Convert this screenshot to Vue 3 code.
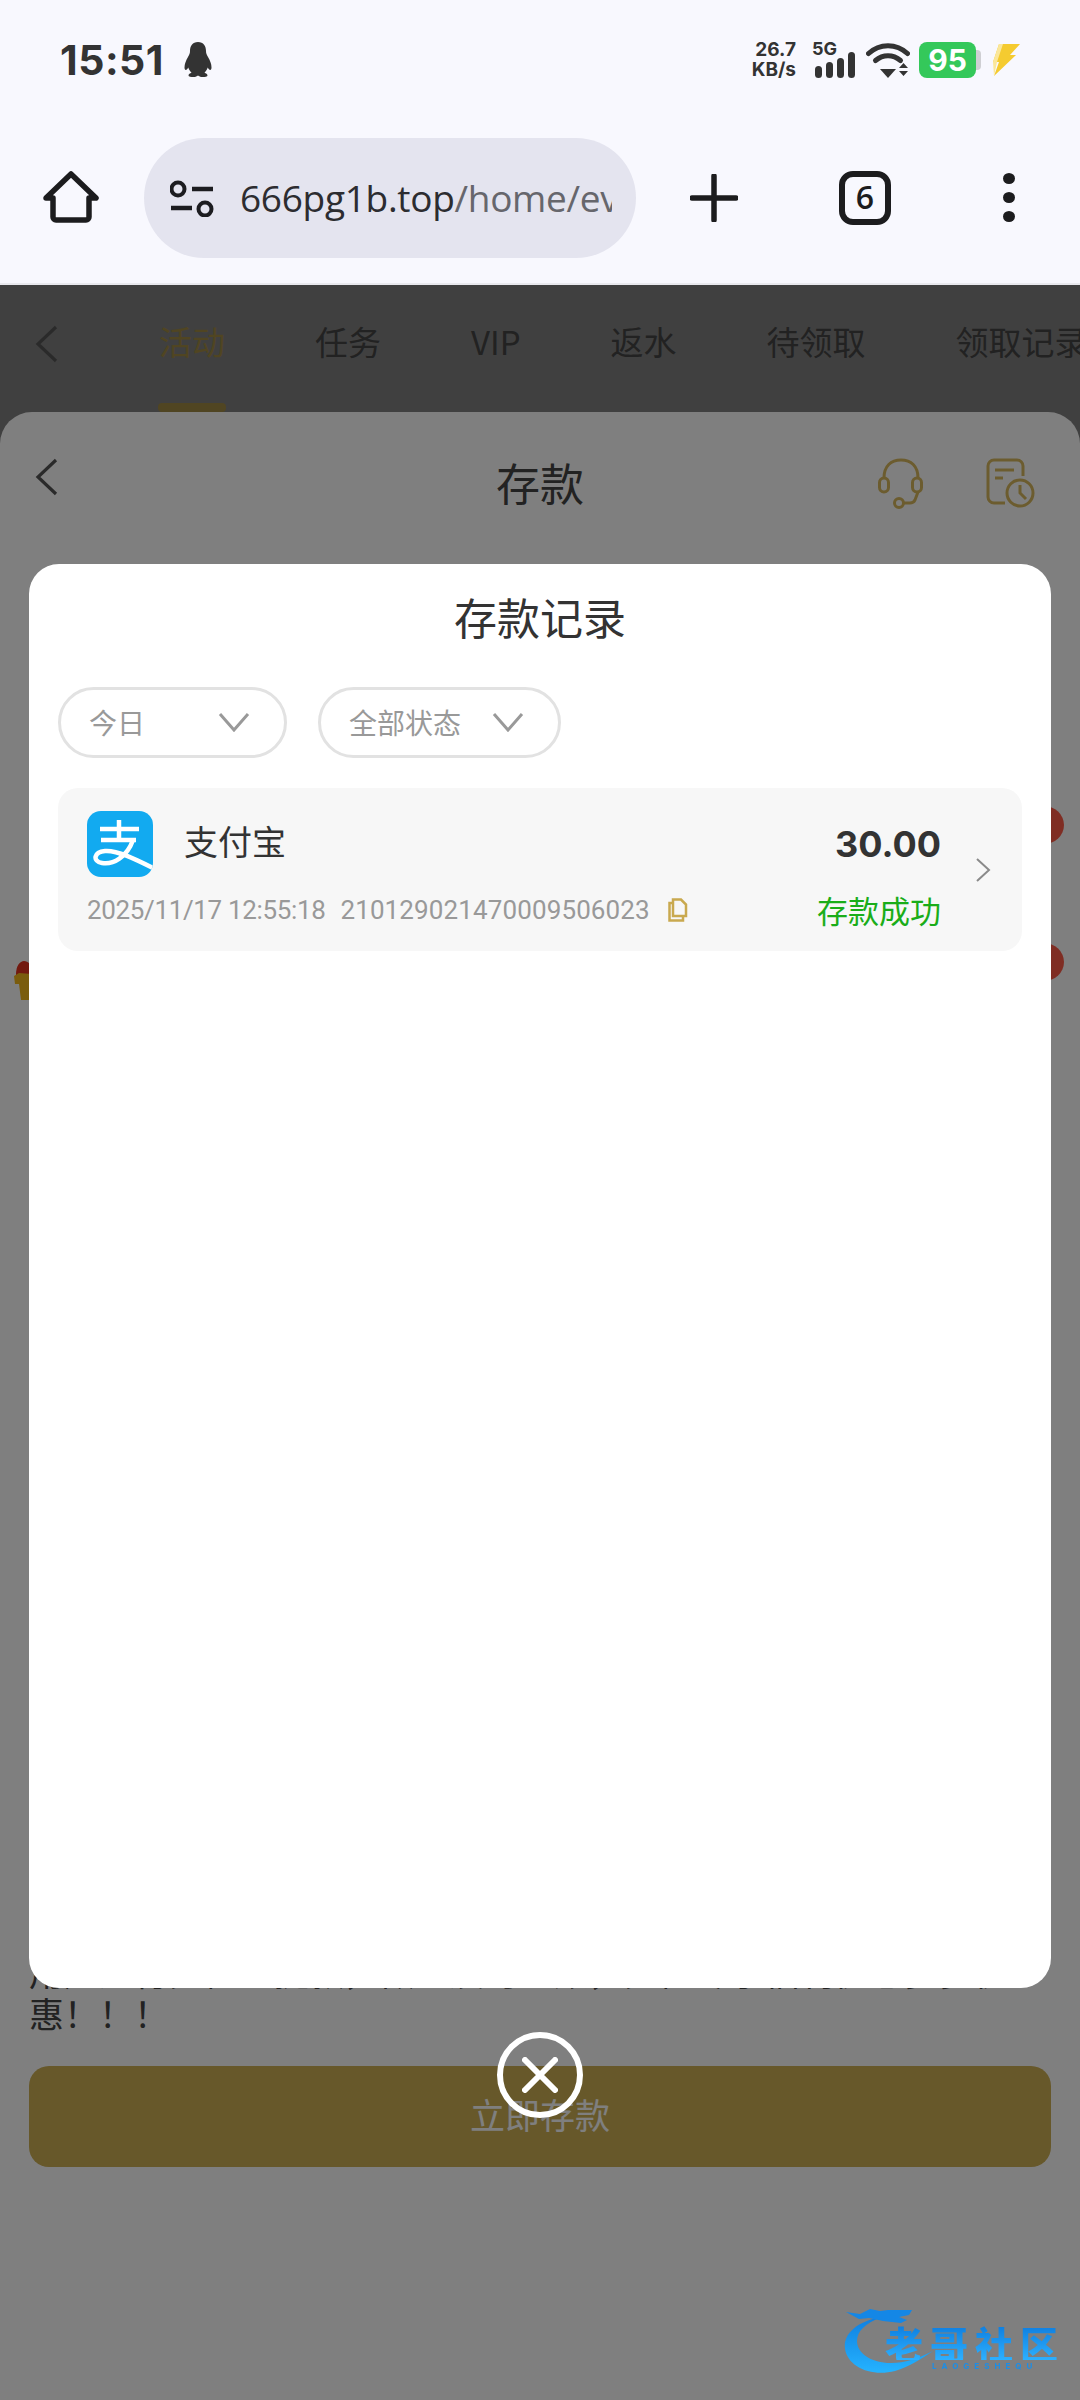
<template>
  <div class="phone">
    <div class="status">
      <div class="status-left">
        <span class="time">15:51</span>
        <svg class="penguin" viewBox="0 0 30 38" width="30" height="38">
          <path d="M15 1c-5.500 0-8 4-8 9 0 2-.5 3.500-2 6-2 3.200-3.500 7-3.500 10.500 0 1.500.5 2.500 1.300 2.500s1.700-1 2.500-2.500c.6 2 1.700 3.800 3.200 5.200-1.500.6-3 1.400-3 2.700 0 1.200 2.500 1.600 5 1.600 2.200 0 3.500-.6 4.500-1.500 1 .9 2.300 1.500 4.500 1.500 2.500 0 5-.4 5-1.600 0-1.300-1.500-2.100-3-2.700 1.500-1.400 2.600-3.200 3.200-5.200.8 1.500 1.700 2.500 2.500 2.500s1.300-1 1.300-2.500c0-3.500-1.500-7.300-3.500-10.500-1.500-2.500-2-4-2-6 0-5-2.500-9-8-9z" fill="#333"/>
        </svg>
      </div>
      <div class="status-right">
        <div class="speed"><span>26.7</span><span>KB/s</span></div>
        <div class="signal">
          <span class="five-g">5G</span>
          <svg viewBox="0 0 42 26" width="42" height="26">
            <rect x="1" y="14" width="7" height="12" rx="3.500" fill="#333"/>
            <rect x="12" y="10" width="7" height="16" rx="3.500" fill="#333"/>
            <rect x="23" y="6" width="7" height="20" rx="3.500" fill="#333"/>
            <rect x="34" y="0" width="7" height="26" rx="3.500" fill="#333"/>
          </svg>
        </div>
        <svg class="wifi" viewBox="0 0 44 36" width="44" height="36">
          <path d="M2.500 11.500C13.500 1 30.500 1 41.500 11.500" fill="none" stroke="#333" stroke-width="5" stroke-linecap="round"/>
          <path d="M9.500 18.500c7.500-6.500 17.500-6.500 25 0" fill="none" stroke="#333" stroke-width="5" stroke-linecap="round"/>
          <path d="M14 27h16l-8 9z" fill="#333"/>
          <path d="M33 26l4.500-5 4.500 5zM33 29l4.500 5 4.500-5z" fill="#333"/>
        </svg>
        <div class="battery"><span class="level">95</span><span class="nub"></span></div>
        <svg class="bolt" viewBox="0 0 30 34" width="30" height="34">
          <path d="M9 1h21L20 12h6L4 33l5-14H3z" fill="#f5cb30"/>
          <path d="M9 1h4L7 19l-3 14-1-14z" fill="#fbe79a"/>
        </svg>
      </div>
    </div>

    <div class="toolbar">
      <svg class="home" viewBox="0 0 56 54" width="56" height="54">
        <path d="M3 27L28 3l25 24h-7v19a3 3 0 0 1-3 3H13a3 3 0 0 1-3-3V27z" fill="none" stroke="#1c1c1e" stroke-width="5.500" stroke-linejoin="round"/>
      </svg>
      <div class="address">
        <svg viewBox="0 0 46 38" width="46" height="38">
          <circle cx="8" cy="10" r="6.500" fill="none" stroke="#1c1c20" stroke-width="4"/>
          <path d="M22 10h21M1 29h21" stroke="#1c1c20" stroke-width="4.500"/>
          <circle cx="35" cy="30" r="6.500" fill="none" stroke="#1c1c20" stroke-width="4"/>
        </svg>
        <div class="url"><span class="host">666pg1b.top</span>/home/ev</div>
      </div>
      <svg class="plus" viewBox="0 0 48 48" width="48" height="48">
        <path d="M24 2v44M2 24h44" stroke="#1c1c1e" stroke-width="5.500" stroke-linecap="round"/>
      </svg>
      <div class="tab-count">6</div>
      <div class="dots"><i></i><i></i><i></i></div>
    </div>

    <div class="main">
      <div class="tabs">
        <svg class="tabs-back" viewBox="0 0 24 38" width="24" height="38">
          <path d="M21 2L3 19l18 17" fill="none" stroke="#555" stroke-width="3.200"/>
        </svg>
        <div class="tab-list">
          <span v-for="(tab, i) in tabs" :key="tab" class="tab" :class="{ active: i === 0 }">{{ tab }}</span>
        </div>
      </div>

      <div class="sheet">
        <div class="sheet-head">
          <svg class="sheet-back" viewBox="0 0 24 38" width="24" height="38">
            <path d="M21 2L3 19l18 17" fill="none" stroke="#555" stroke-width="3.200"/>
          </svg>
          <span class="sheet-title">存款</span>
          <div class="sheet-icons">
            <svg viewBox="0 0 48 54" width="48" height="54" fill="none" stroke="#d8b95e" stroke-width="3">
              <path d="M7 20C7 8 14 2 24 2s17 6 17 18"/>
              <rect x="2.500" y="20" width="9" height="14" rx="4.500"/>
              <rect x="35.500" y="20" width="9" height="14" rx="4.500"/>
              <path d="M41 34l-3 8q-1.500 3-5 3h-6"/>
              <circle cx="22" cy="45" r="4.500"/>
            </svg>
            <svg viewBox="0 0 50 54" width="50" height="54" fill="none" stroke="#d8b95e" stroke-width="3">
              <path d="M38 18V8a6 6 0 0 0-6-6H9a6 6 0 0 0-6 6v31a6 6 0 0 0 6 6h11"/>
              <path d="M10 12h19M10 20h8"/>
              <circle cx="35" cy="35" r="13"/>
              <path d="M35 27v8l6 6"/>
            </svg>
          </div>
        </div>
        <div class="sheet-body">
          <div class="dot-right first"></div>
          <div class="dot-right second"></div>
          <svg class="gift" viewBox="0 0 18 40" width="18" height="40">
            <path d="M2 14C2 6 6 1 10 1s8 4 8 9v6H2z" fill="#e4321e"/>
            <path d="M0 16l5-3 13 1v26H7L5 24H1z" fill="#f5b81a"/>
          </svg>
          <p class="notice">用户进行充值、提款，做到及时到账，充值专享福利优惠多多优<br>惠！！！</p>
          <div class="submit">立即存款</div>
        </div>
      </div>

      <div class="mask"></div>

      <div class="modal">
        <h2 class="modal-title">存款记录</h2>
        <div class="filters">
          <div class="pill">
            <span>今日</span>
            <svg viewBox="0 0 32 20" width="32" height="20"><path d="M2 2l14 16L30 2" fill="none" stroke="#999" stroke-width="3"/></svg>
          </div>
          <div class="pill state">
            <span>全部状态</span>
            <svg viewBox="0 0 32 20" width="32" height="20"><path d="M2 2l14 16L30 2" fill="none" stroke="#999" stroke-width="3"/></svg>
          </div>
        </div>
        <div class="record">
          <div class="record-main">
            <div class="record-top">
              <div class="record-pay">
                <svg class="alipay" viewBox="0 0 66 66" width="66" height="66">
                  <defs>
                    <clipPath id="alipayClip"><rect width="66" height="66" rx="14"/></clipPath>
                  </defs>
                  <rect width="66" height="66" rx="14" fill="#12aaf0"/>
                  <g clip-path="url(#alipayClip)" fill="none" stroke="#fff">
                    <path d="M13 18h39M32 9v20M14 29h35" stroke-width="4.500"/>
                    <path d="M46 29C40 46 26 54 15 52 5 50 7 41 18 40c12-1 30 8 50 18" stroke-width="4.500"/>
                  </g>
                </svg>
                <span class="pay-name">支付宝</span>
              </div>
              <span class="amount">30.00</span>
            </div>
            <div class="record-bottom">
              <div class="record-info">
                <span class="record-time">2025/11/17 12:55:18</span>
                <span class="record-no">210129021470009506023</span>
                <svg viewBox="0 0 20 24" width="20" height="24" fill="none" stroke="#c9a94f" stroke-width="2.500">
                  <path d="M5 1.500h8l5 5V18H5z"/>
                  <path d="M5 5H1.500v17.500H15V18"/>
                </svg>
              </div>
              <span class="state-ok">存款成功</span>
            </div>
          </div>
          <svg class="record-arrow" viewBox="0 0 16 24" width="16" height="24">
            <path d="M2 1l12 11L2 23" fill="none" stroke="#8a8a8a" stroke-width="2"/>
          </svg>
        </div>
      </div>

      <div class="close">
        <svg viewBox="0 0 36 36" width="36" height="36">
          <path d="M3 3l30 30M33 3L3 33" stroke="#fff" stroke-width="6" stroke-linecap="round"/>
        </svg>
      </div>

      <div class="watermark">
        <svg class="swirl" viewBox="0 0 100 72" width="100" height="72">
          <defs>
            <linearGradient id="wm" x1="0" y1="0" x2="0" y2="1">
              <stop offset="0" stop-color="#0f7fe0"/>
              <stop offset="1" stop-color="#25b3ff"/>
            </linearGradient>
          </defs>
          <path d="M38 12C12 17 0 30 2 44c3 18 26 28 50 22 14-4 26-12 38-20-16 8-28 12-42 12C28 58 14 48 14 36c0-10 8-17 24-24z" fill="url(#wm)"/>
          <path d="M3 7l14 2 10-5 10 2 8-1 24 0-3 5-10 2 8 3-6 3-18-2-14-3-10 1z" fill="#1487e6"/>
        </svg>
        <span class="wm-name">老哥社区</span>
        <span class="wm-sub">LAOGESHEQU</span>
      </div>
    </div>
  </div>
</template>

<script setup>
const tabs = ['活动', '任务', 'VIP', '返水', '待领取', '领取记录']
</script>

<style>
html, body {
  margin: 0;
  padding: 0;
  background: #fff;
}
</style>

<style scoped>
.phone {
  width: 1080px;
  height: 2400px;
  display: flex;
  flex-direction: column;
  overflow: hidden;
  font-family: "Noto Sans CJK SC", "Noto Sans", sans-serif;
  background: #f8f8fe;
}
.status {
  height: 84px;
  padding: 36px 60px 0 60px;
  box-sizing: border-box;
  display: flex;
  justify-content: space-between;
  align-items: center;
}
.status-left {
  display: flex;
  align-items: center;
  gap: 19px;
}
.time {
  font-family: Inter, sans-serif;
  font-size: 41px;
  font-weight: 700;
  color: #333;
  letter-spacing: 0.5px;
}
.status-right {
  display: flex;
  align-items: center;
}
.speed {
  width: 46px;
  display: flex;
  flex-direction: column;
  align-items: flex-end;
  font-family: Inter, sans-serif;
  font-size: 19px;
  line-height: 20px;
  font-weight: 700;
  color: #333;
  white-space: nowrap;
}
.signal {
  position: relative;
  width: 42px;
  height: 36px;
  margin-left: 18px;
}
.signal svg {
  position: absolute;
  left: 0;
  bottom: 0;
}
.five-g {
  position: absolute;
  left: -2px;
  top: -4px;
  font-family: Inter, sans-serif;
  font-size: 18px;
  font-weight: 700;
  color: #333;
}
.wifi {
  margin-left: 10px;
}
.battery {
  display: flex;
  align-items: center;
  margin-left: 9px;
}
.level {
  width: 57px;
  height: 36px;
  border-radius: 8px;
  background: #34c85a;
  color: #fff;
  font-family: Inter, sans-serif;
  font-weight: 700;
  font-size: 30px;
  line-height: 36px;
  text-align: center;
}
.nub {
  width: 5px;
  height: 20px;
  border-radius: 0 4px 4px 0;
  background: #cfcfd3;
}
.bolt {
  margin-left: 9px;
}
.toolbar {
  height: 201px;
  box-sizing: border-box;
  padding: 28px 0 0 43px;
  display: flex;
  align-items: center;
  border-bottom: 2px solid #e9e9ee;
}
.address {
  width: 492px;
  height: 120px;
  margin-left: 45px;
  padding-left: 26px;
  box-sizing: border-box;
  border-radius: 60px;
  background: #e4e4ef;
  display: flex;
  align-items: center;
  gap: 24px;
}
.url {
  width: 372px;
  height: 60px;
  overflow: hidden;
  white-space: nowrap;
  font-family: "Open Sans", sans-serif;
  font-size: 37px;
  line-height: 60px;
  letter-spacing: -0.3px;
  color: #66666c;
}
.host {
  color: #2c2c30;
}
.plus {
  margin-left: 54px;
}
.tab-count {
  width: 52px;
  height: 54px;
  margin-left: 101px;
  box-sizing: border-box;
  border: 6px solid #1c1c1e;
  border-radius: 14px;
  font-family: "Open Sans", sans-serif;
  font-size: 32px;
  font-weight: 600;
  line-height: 40px;
  text-align: center;
  color: #1c1c1e;
}
.dots {
  margin-left: 112px;
  display: flex;
  flex-direction: column;
  gap: 8px;
}
.dots i {
  display: block;
  width: 12px;
  height: 11px;
  border-radius: 50%;
  background: #1c1c1e;
}
.main {
  position: relative;
  flex: 1;
  display: flex;
  flex-direction: column;
  background: #808080;
}
.tabs {
  height: 127px;
  display: flex;
  padding-left: 35px;
  box-sizing: border-box;
}
.tabs-back {
  flex: none;
  margin-top: 40px;
}
.tab-list {
  margin-left: 100px;
  display: flex;
  gap: 90px;
  white-space: nowrap;
}
.tab {
  position: relative;
  height: 127px;
  padding-top: 32px;
  box-sizing: border-box;
  font-size: 33px;
  line-height: 48px;
  color: #444;
}
.tab.active {
  color: #a08a44;
}
.tab.active::after {
  content: "";
  position: absolute;
  left: -1px;
  right: -1px;
  bottom: 0;
  height: 9px;
  border-radius: 4px;
  background: #a08a44;
}
.sheet {
  flex: 1;
  display: flex;
  flex-direction: column;
  background: #fff;
  border-radius: 32px 32px 0 0;
}
.sheet-head {
  position: relative;
  height: 152px;
  display: flex;
  justify-content: center;
  padding-top: 38px;
  box-sizing: border-box;
}
.sheet-back {
  position: absolute;
  left: 35px;
  top: 46px;
}
.sheet-title {
  font-size: 44px;
  line-height: 64px;
  color: #444;
}
.sheet-icons {
  position: absolute;
  right: 45px;
  top: 46px;
  display: flex;
  gap: 60px;
}
.sheet-body {
  position: relative;
  flex: 1;
  padding: 0 29px;
  display: flex;
  flex-direction: column;
}
.dot-right {
  position: absolute;
  right: 16px;
  width: 40px;
  height: 38px;
  border-radius: 50%;
  background: #ff5b47;
}
.dot-right.first { top: 242px; }
.dot-right.second { top: 379px; }
.gift {
  position: absolute;
  left: 14px;
  top: 396px;
}
.notice {
  margin: 1386px 0 0 0;
  font-size: 35px;
  line-height: 42px;
  color: #444;
  white-space: nowrap;
}
.submit {
  height: 101px;
  margin-top: 32px;
  border-radius: 20px;
  background: #ceb054;
  color: #fff;
  font-size: 35px;
  line-height: 96px;
  text-align: center;
}
.mask {
  position: absolute;
  inset: 0;
  background: rgba(0, 0, 0, 0.5);
}
.modal {
  position: absolute;
  left: 29px;
  top: 279px;
  width: 1022px;
  height: 1424px;
  box-sizing: border-box;
  padding: 21px 29px 0;
  border-radius: 30px;
  background: #fff;
}
.modal-title {
  margin: 0;
  font-size: 43px;
  font-weight: 400;
  line-height: 62px;
  text-align: center;
  color: #333;
}
.filters {
  margin-top: 40px;
  display: flex;
  gap: 31px;
}
.pill {
  width: 229px;
  height: 71px;
  padding: 0 34px 2px 28px;
  box-sizing: border-box;
  border: 3px solid #e2e2e2;
  border-radius: 36px;
  display: flex;
  align-items: center;
  justify-content: space-between;
  font-size: 28px;
  color: #999;
}
.pill.state {
  width: 243px;
}
.record {
  margin-top: 30px;
  height: 163px;
  box-sizing: border-box;
  padding: 23px 31px 0 29px;
  display: flex;
  gap: 34px;
  background: #f7f7f7;
  border-radius: 20px;
}
.record-main {
  flex: 1;
  min-width: 0;
}
.record-top {
  display: flex;
  justify-content: space-between;
}
.record-pay {
  display: flex;
  gap: 31px;
}
.pay-name {
  font-size: 34px;
  line-height: 60px;
  color: #333;
}
.amount {
  font-family: Inter, sans-serif;
  font-size: 36px;
  font-weight: 700;
  line-height: 66px;
  color: #333;
}
.record-bottom {
  margin-top: 10px;
  display: flex;
  justify-content: space-between;
  align-items: center;
}
.record-info {
  display: flex;
  align-items: center;
  gap: 15px;
  font-family: Roboto, sans-serif;
  font-size: 26px;
  color: #999;
  white-space: nowrap;
}
.record-time {
  letter-spacing: -0.35px;
}
.record-no {
  letter-spacing: 0.12px;
}
.record-info svg {
  margin-left: 3px;
}
.state-ok {
  font-size: 31px;
  line-height: 46px;
  color: #1aad19;
}
.record-arrow {
  margin-top: 47px;
}
.close {
  position: absolute;
  left: 497px;
  top: 1747px;
  width: 86px;
  height: 86px;
  box-sizing: border-box;
  border: 6px solid #fff;
  border-radius: 50%;
  display: flex;
  align-items: center;
  justify-content: center;
}
.watermark {
  position: absolute;
  left: 843px;
  top: 2020px;
  width: 226px;
  height: 76px;
  filter: blur(0.6px);
}
.swirl {
  position: absolute;
  left: 0;
  top: 0;
}
.wm-name {
  position: absolute;
  left: 42px;
  top: 21px;
  font-size: 38px;
  font-weight: 900;
  line-height: 34px;
  letter-spacing: 7px;
  white-space: nowrap;
  background: linear-gradient(180deg, #0f7fe0, #2db0ff);
  -webkit-background-clip: text;
  background-clip: text;
  color: transparent;
}
.wm-sub {
  position: absolute;
  left: 89px;
  top: 55px;
  font-family: Inter, sans-serif;
  font-size: 8px;
  line-height: 12px;
  font-weight: 700;
  letter-spacing: 5px;
  color: #1b8ee8;
}
</style>
